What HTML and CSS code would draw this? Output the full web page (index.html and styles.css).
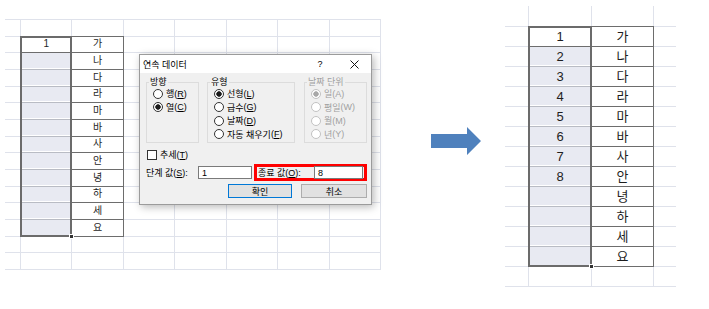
FILE: index.html
```html
<!DOCTYPE html>
<html lang="ko">
<head>
  <meta charset="UTF-8" />
  <title>연속 데이터</title>
  <link rel="stylesheet" href="styles.css">
</head>
<body>
  <div class="stage">
    <div class="sheet sheet-left">
      <div class="cols"><span></span><span></span><span></span><span></span><span></span><span></span><span></span><span></span></div>
      <div class="rows"><span></span><span></span><span></span><span></span><span></span><span></span><span></span><span></span><span></span><span></span><span></span><span></span><span></span><span></span><span></span></div>
      <div class="data">
        <span>1</span><span>가</span>
        <span class="sel"></span><span>나</span>
        <span class="sel"></span><span>다</span>
        <span class="sel"></span><span>라</span>
        <span class="sel"></span><span>마</span>
        <span class="sel"></span><span>바</span>
        <span class="sel"></span><span>사</span>
        <span class="sel"></span><span>안</span>
        <span class="sel"></span><span>녕</span>
        <span class="sel"></span><span>하</span>
        <span class="sel"></span><span>세</span>
        <span class="sel"></span><span>요</span>
      </div>
      <div class="selection"></div>

      <div class="dialog">
        <div class="titlebar">
          <span class="title">연속 데이터</span>
          <span class="ctl">?</span>
          <span class="ctl">
            <svg width="9" height="9" viewBox="0 0 9 9"><path d="M0.5 0.5 L8.5 8.5 M8.5 0.5 L0.5 8.5" stroke="#111" stroke-width="1" fill="none"/></svg>
          </span>
        </div>
        <div class="dialog-body">
          <div class="groups">
            <fieldset class="group group-dir">
              <legend>방향</legend>
              <div class="opt"><span class="radio"></span>행<span class="key">(<u>R</u>)</span></div>
              <div class="opt"><span class="radio on"></span>열<span class="key">(<u>C</u>)</span></div>
            </fieldset>
            <fieldset class="group group-type">
              <legend>유형</legend>
              <div class="opt"><span class="radio on"></span>선형<span class="key">(<u>L</u>)</span></div>
              <div class="opt"><span class="radio"></span>급수<span class="key">(<u>G</u>)</span></div>
              <div class="opt"><span class="radio"></span>날짜<span class="key">(<u>D</u>)</span></div>
              <div class="opt"><span class="radio"></span>자동 채우기<span class="key">(<u>F</u>)</span></div>
            </fieldset>
            <fieldset class="group group-unit">
              <legend>날짜 단위</legend>
              <div class="opt"><span class="radio on"></span>일<span class="key">(A)</span></div>
              <div class="opt"><span class="radio"></span>평일<span class="key">(W)</span></div>
              <div class="opt"><span class="radio"></span>월<span class="key">(M)</span></div>
              <div class="opt"><span class="radio"></span>년<span class="key">(Y)</span></div>
            </fieldset>
          </div>
          <div class="check"><span class="box"></span>추세<span class="key">(<u>T</u>)</span></div>
          <div class="values">
            <span class="step-label">단계 값<span class="key">(<u>S</u>):</span></span>
            <span class="field step-field">1</span>
            <div class="target">
              <span class="stop-label">종료 값<span class="key">(<u>O</u>):</span></span>
              <span class="field stop-field">8</span>
            </div>
          </div>
          <div class="buttons">
            <span class="btn btn-default">확인</span>
            <span class="btn btn-cancel">취소</span>
          </div>
        </div>
      </div>
    </div>

    <div class="arrow">
      <svg width="50" height="28" viewBox="0 0 50 28"><polygon points="0,7 36,7 36,0 50,14 36,28 36,21 0,21" fill="#4f81bd"/></svg>
    </div>

    <div class="sheet sheet-right">
      <div class="cols"><span></span><span></span><span></span><span></span></div>
      <div class="rows"><span></span><span></span><span></span><span></span><span></span><span></span><span></span><span></span><span></span><span></span><span></span><span></span><span></span><span></span></div>
      <div class="data">
        <span>1</span><span>가</span>
        <span class="sel">2</span><span>나</span>
        <span class="sel">3</span><span>다</span>
        <span class="sel">4</span><span>라</span>
        <span class="sel">5</span><span>마</span>
        <span class="sel">6</span><span>바</span>
        <span class="sel">7</span><span>사</span>
        <span class="sel">8</span><span>안</span>
        <span class="sel"></span><span>녕</span>
        <span class="sel"></span><span>하</span>
        <span class="sel"></span><span>세</span>
        <span class="sel"></span><span>요</span>
      </div>
      <div class="selection"></div>
    </div>
  </div>
</body>
</html>
```

FILE: styles.css
```css
body {
  margin: 0;
  background: #fff;
  font-family: "Liberation Sans", "Noto Sans CJK KR", sans-serif;
  color: #1e1e1e;
}
.stage {
  display: flex;
  align-items: flex-start;
  width: 709px;
  height: 309px;
  overflow: hidden;
}

/* sheet grid lines */
.sheet {
  display: grid;
  position: relative;
  box-sizing: border-box;
}
.sheet .cols, .sheet .rows {
  grid-area: 1 / 1 / -1 / -1;
  display: flex;
}
.sheet .rows {
  flex-direction: column;
}
.cols span, .rows span {
  box-sizing: border-box;
  flex: 1;
}
.cols span { border-right: 1px solid #dfe2eb; }
.rows span { border-bottom: 1px solid #dfe2eb; }

.sheet-left {
  margin: 19px 0 0 5px;
  width: 376px;
  height: 251px;
  border-top: 1px solid #dfe2eb;
  grid-template-columns: 16px repeat(7, 1fr);
  grid-template-rows: repeat(15, 1fr);
  font-size: 10px;
}
.sheet-left .cols span:first-child { flex: 0 0 16px; }

.sheet-right {
  margin: 6px 0 0 24px;
  width: 171px;
  height: 281px;
  grid-template-columns: 24px 63px 62px 22px;
  grid-template-rows: 21px repeat(13, 20px);
  font-size: 13px;
}
.sheet-right .cols span:nth-child(1) { flex: 0 0 24px; }
.sheet-right .cols span:nth-child(2) { flex: 0 0 63px; }
.sheet-right .cols span:nth-child(3) { flex: 0 0 62px; }
.sheet-right .cols span:nth-child(4) { flex: 0 0 22px; border-right: none; }
.sheet-right .rows span:first-child { flex: 0 0 21px; }

/* filled cells */
.data {
  grid-row: 2 / 14;
  grid-column: 2 / 4;
  display: grid;
  margin: -1px 0 0 -1px;
  border-top: 1px solid #6d6d6d;
  border-left: 1px solid #6d6d6d;
}
.sheet-left .data {
  grid-template-columns: 1fr 1fr;
  grid-template-rows: repeat(12, 1fr);
}
.sheet-right .data {
  grid-template-columns: 63px 62px;
  grid-template-rows: repeat(12, 20px);
}
.data span {
  display: flex;
  align-items: center;
  justify-content: center;
  box-sizing: border-box;
  border-right: 1px solid #6d6d6d;
  border-bottom: 1px solid #6d6d6d;
  background: #fff;
  line-height: 1;
}
.data span.sel {
  background: #e8eaf2;
  border-bottom-color: #b9bcc4;
  box-shadow: inset 0 -1px #fff, inset -1px 0 #fff;
}
.selection {
  grid-row: 2 / 14;
  grid-column: 2 / 3;
  margin: -1px 0 0 -1px;
  border: 2px solid #6b6b6b;
  position: relative;
}
.selection::after {
  content: "";
  position: absolute;
  right: -4px;
  bottom: -4px;
  width: 3px;
  height: 3px;
  background: #333;
  border: 1px solid #fff;
}

/* dialog */
.dialog {
  position: absolute;
  left: 134px;
  top: 34px;
  width: 233px;
  height: 151px;
  box-sizing: border-box;
  border: 1px solid #9b9b9b;
  background: #f0f0f0;
  box-shadow: 2px 2px 8px rgba(0,0,0,0.28);
  font-size: 9px;
  color: #000;
  display: flex;
  flex-direction: column;
  z-index: 2;
}
.key {
  font-family: "Liberation Sans", sans-serif;
}
.titlebar {
  height: 18px;
  display: flex;
  align-items: center;
  padding-left: 3px;
  background: #fff;
}
.title { flex: 1; }
.ctl {
  width: 34px;
  display: flex;
  justify-content: center;
  align-items: center;
}
.dialog-body {
  padding: 4px 4px 0 6px;
}
.groups {
  display: flex;
}
.group {
  margin: 0;
  padding: 0 0 0 6px;
  height: 66px;
  box-sizing: border-box;
  min-width: 0;
  border: 1px solid #dcdcdc;
}
.group legend {
  padding: 0 1px;
  margin-left: -4px;
  line-height: 10px;
}
.group-dir { width: 53px; }
.group-type { width: 88px; margin-left: 8px; }
.group-unit { width: 63px; margin-left: 9px; color: #a0a0a0; }
.opt {
  display: flex;
  align-items: center;
  gap: 3px;
  height: 13.5px;
  white-space: nowrap;
}
.opt .key { margin-left: -3px; }
.radio {
  width: 10px;
  height: 10px;
  box-sizing: border-box;
  border: 1px solid #333;
  border-radius: 50%;
  background: #fff;
}
.radio.on {
  background: radial-gradient(circle, #1a1a1a 2.4px, #fff 3px);
}
.group-unit .radio { border-color: #c2c2c2; }
.group-unit .radio.on {
  background: radial-gradient(circle, #a8a8a8 2.4px, #fff 3px);
}
.check {
  display: flex;
  align-items: center;
  gap: 3px;
  height: 13px;
  margin-top: 5px;
  padding-left: 1px;
}
.check .key { margin-left: -3px; }
.check .box {
  width: 10px;
  height: 10px;
  box-sizing: border-box;
  border: 1px solid #333;
  background: #fff;
}
.values {
  display: flex;
  align-items: center;
  height: 17px;
  margin-top: 3px;
}
.step-label { width: 52px; white-space: nowrap; }
.field {
  height: 13px;
  box-sizing: border-box;
  border: 1px solid #7a7a7a;
  background: #fff;
  padding-left: 3px;
  display: flex;
  align-items: center;
}
.step-field { width: 54px; }
.target {
  margin-left: 2px;
  width: 113px;
  height: 17px;
  box-sizing: border-box;
  border: 3px solid #f00;
  padding: 0 1px;
  display: flex;
  align-items: center;
}
.stop-label { flex: 1; white-space: nowrap; }
.stop-field { width: 49px; }
.buttons {
  display: flex;
  justify-content: flex-end;
  gap: 9px;
  margin-top: 3px;
}
.btn {
  height: 14px;
  box-sizing: border-box;
  border: 1px solid #adadad;
  background: #e1e1e1;
  display: flex;
  align-items: center;
  justify-content: center;
}
.btn-default { width: 64px; border-color: #0078d7; }
.btn-cancel { width: 66px; }

.arrow {
  margin: 127px 0 0 50px;
  line-height: 0;
}
```
